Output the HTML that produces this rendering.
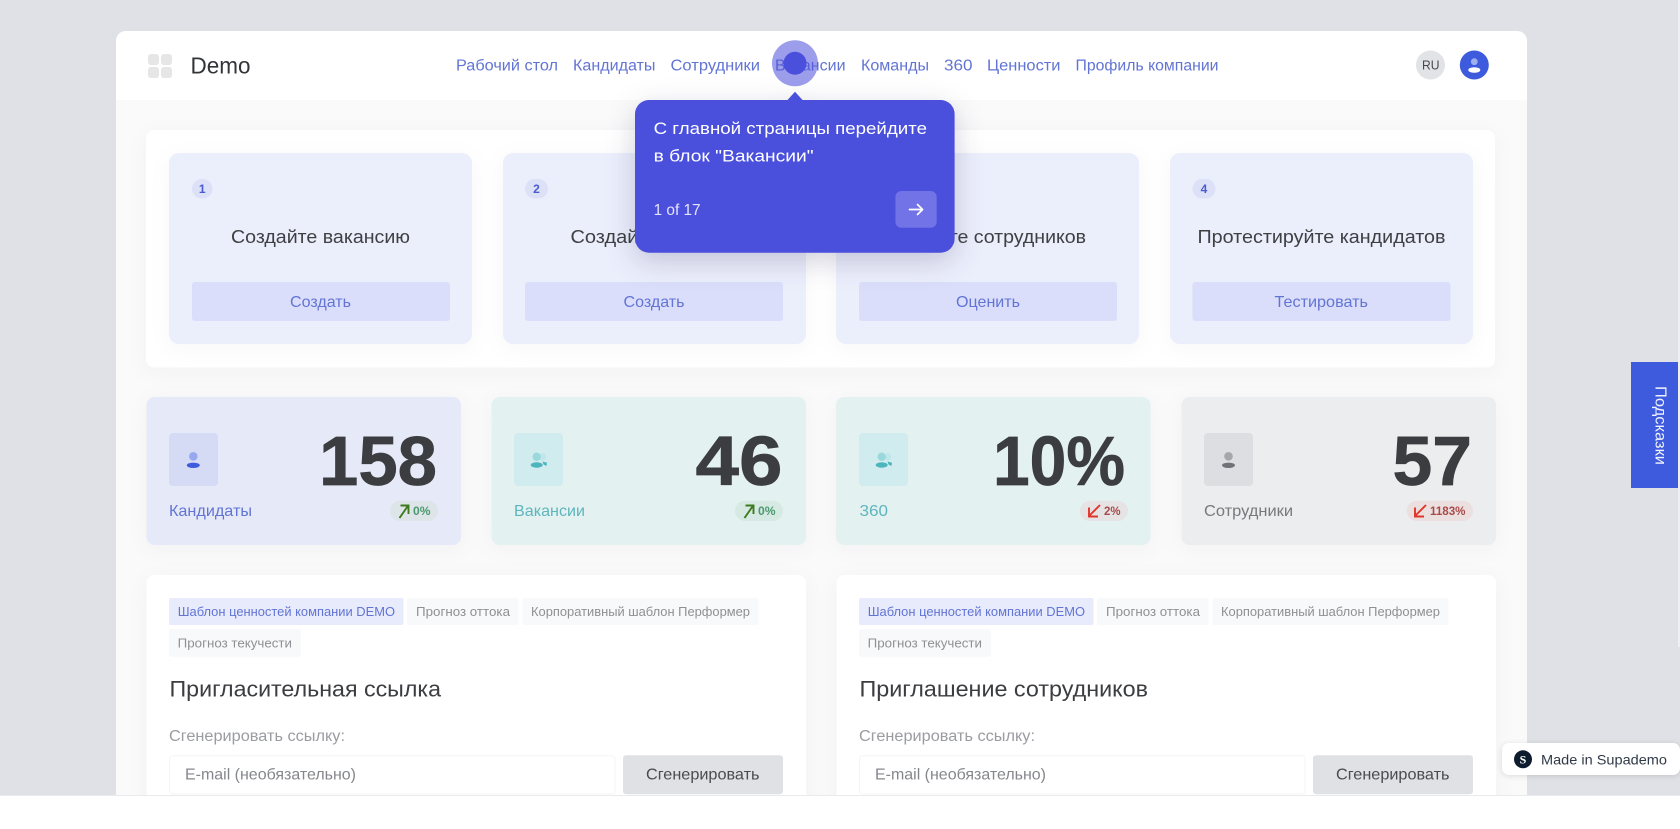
<!DOCTYPE html>
<html lang="ru">
<head>
<meta charset="utf-8">
<title>Demo</title>
<style>
html,body{margin:0;padding:0;width:1680px;height:829px;overflow:hidden;background:#fff}
svg{display:block;filter:blur(.3px)}
text{font-family:"Liberation Sans","Noto Sans CJK SC",sans-serif}
.sh{filter:drop-shadow(0 4px 10px rgba(30,40,80,.035))}
.tip{filter:drop-shadow(0 8px 14px rgba(30,30,80,.2))}
</style>
</head>
<body>
<svg width="1680" height="829" viewBox="0 0 1680 829" xmlns="http://www.w3.org/2000/svg">
  <rect width="1680" height="829" fill="#dfe1e6"/>
  <rect x="1678" y="0" width="2" height="647" fill="#eeeff1"/>

  <!-- app shell -->
  <rect x="116" y="31" width="1411" height="790" rx="10" fill="#fafafa"/>
  <path d="M116 100V41a10 10 0 0 1 10-10H1517a10 10 0 0 1 10 10V100Z" fill="#fff"/>

  <!-- header -->
  <g fill="#e6e6e6">
    <rect x="148" y="54" width="11" height="11" rx="3"/>
    <rect x="161" y="54" width="11" height="11" rx="3"/>
    <rect x="148" y="67" width="11" height="11" rx="3"/>
    <rect x="161" y="67" width="11" height="11" rx="3"/>
  </g>
  <text x="190.5" y="73.3" font-size="23" fill="#333438" textLength="60" lengthAdjust="spacingAndGlyphs">Demo</text>
  <g font-size="15.5" fill="#6274d4">
    <text x="456" y="70.5" textLength="102" lengthAdjust="spacingAndGlyphs">Рабочий стол</text>
    <text x="573" y="70.5" textLength="82.5" lengthAdjust="spacingAndGlyphs">Кандидаты</text>
    <text x="670.5" y="70.5" textLength="89.5" lengthAdjust="spacingAndGlyphs">Сотрудники</text>
    <text x="775" y="70.5" textLength="70.5" lengthAdjust="spacingAndGlyphs">Вакансии</text>
    <text x="861" y="70.5" textLength="68" lengthAdjust="spacingAndGlyphs">Команды</text>
    <text x="944" y="70.5" textLength="28.5" lengthAdjust="spacingAndGlyphs">360</text>
    <text x="987" y="70.5" textLength="73.5" lengthAdjust="spacingAndGlyphs">Ценности</text>
    <text x="1075.5" y="70.5" textLength="143" lengthAdjust="spacingAndGlyphs">Профиль компании</text>
  </g>
  <circle cx="1430.5" cy="65" r="14.5" fill="#e2e3e6"/>
  <text x="1422" y="69.6" font-size="13" fill="#48494d" textLength="17.5" lengthAdjust="spacingAndGlyphs">RU</text>
  <circle cx="1474.3" cy="65" r="14.5" fill="#3d5bdc"/>
  <circle cx="1474.3" cy="61.7" r="3.4" fill="#9fb0f0"/>
  <ellipse cx="1474.3" cy="70" rx="6" ry="2.8" fill="#fff"/>

  <!-- steps panel -->
  <rect x="146" y="130" width="1349" height="237.5" rx="8" fill="#fff" class="sh"/>

  <g class="sh" fill="#ebeefb">
    <rect x="169" y="153" width="303" height="191" rx="10"/>
    <rect x="503" y="153" width="303" height="191" rx="10"/>
    <rect x="836" y="153" width="303" height="191" rx="10"/>
    <rect x="1170" y="153" width="303" height="191" rx="10"/>
  </g>
  <g fill="#dde1f8">
    <rect x="192" y="179" width="20.5" height="19.5" rx="9.7"/>
    <rect x="525" y="179" width="23" height="19.5" rx="9.7"/>
    <rect x="859" y="179" width="23" height="19.5" rx="9.7"/>
    <rect x="1192.5" y="179" width="23" height="19.5" rx="9.7"/>
  </g>
  <g font-size="12" font-weight="700" fill="#4a5bd0" text-anchor="middle">
    <text x="202.2" y="193">1</text>
    <text x="536.5" y="193">2</text>
    <text x="870.5" y="193">3</text>
    <text x="1204" y="193">4</text>
  </g>
  <g font-size="18.5" fill="#3f4043">
    <text x="231" y="243" textLength="179" lengthAdjust="spacingAndGlyphs">Создайте вакансию</text>
    <text x="570.5" y="243" textLength="190" lengthAdjust="spacingAndGlyphs">Создайте кандидата</text>
    <text x="890" y="243" textLength="196" lengthAdjust="spacingAndGlyphs">Оцените сотрудников</text>
    <text x="1197.5" y="243" textLength="248" lengthAdjust="spacingAndGlyphs">Протестируйте кандидатов</text>
  </g>
  <g fill="#dadefa">
    <rect x="192" y="282" width="258" height="39" rx="3"/>
    <rect x="525" y="282" width="258" height="39" rx="3"/>
    <rect x="859" y="282" width="258" height="39" rx="3"/>
    <rect x="1192.5" y="282" width="258" height="39" rx="3"/>
  </g>
  <g font-size="16" fill="#6274d4">
    <text x="290" y="306.8" textLength="61" lengthAdjust="spacingAndGlyphs">Создать</text>
    <text x="623.5" y="306.8" textLength="61" lengthAdjust="spacingAndGlyphs">Создать</text>
    <text x="956" y="306.8" textLength="64" lengthAdjust="spacingAndGlyphs">Оценить</text>
    <text x="1274.5" y="306.8" textLength="93.5" lengthAdjust="spacingAndGlyphs">Тестировать</text>
  </g>

  <!-- stat cards -->
  <g class="sh">
    <rect x="146.5" y="397" width="314.5" height="148" rx="8" fill="#e6e9f7"/>
    <rect x="491.5" y="397" width="314.5" height="148" rx="8" fill="#e3f2f1"/>
    <rect x="836" y="397" width="314.5" height="148" rx="8" fill="#e3f2f1"/>
    <rect x="1181.5" y="397" width="314.5" height="148" rx="8" fill="#ecedef"/>
  </g>
  <rect x="169" y="433" width="49" height="53" rx="4" fill="#d5daf5"/>
  <rect x="514" y="433" width="49" height="53" rx="4" fill="#d0ecee"/>
  <rect x="859" y="433" width="49" height="53" rx="4" fill="#d0ecee"/>
  <rect x="1204" y="433" width="49" height="53" rx="4" fill="#dddee1"/>

  <circle cx="193.3" cy="456.3" r="4.3" fill="#98a8ee"/>
  <ellipse cx="193.3" cy="465.3" rx="6.5" ry="2.7" fill="#3d5bdc"/>

  <g id="teal1">
    <circle cx="542.7" cy="456.8" r="3.6" fill="#bfe6e8"/>
    <circle cx="536.7" cy="456.8" r="4.2" fill="#9bd8dd"/>
    <ellipse cx="536.7" cy="465" rx="6" ry="2.7" fill="#4db5bd"/>
    <path d="M542.5 461.5l4.5 1.2-.5 3.3-3-1.5Z" fill="#4db5bd"/>
  </g>
  <g transform="translate(345 0)">
    <circle cx="542.7" cy="456.8" r="3.6" fill="#bfe6e8"/>
    <circle cx="536.7" cy="456.8" r="4.2" fill="#9bd8dd"/>
    <ellipse cx="536.7" cy="465" rx="6" ry="2.7" fill="#4db5bd"/>
    <path d="M542.5 461.5l4.5 1.2-.5 3.3-3-1.5Z" fill="#4db5bd"/>
  </g>

  <circle cx="1228.5" cy="456.3" r="4.3" fill="#a6a7ab"/>
  <ellipse cx="1228.5" cy="465.3" rx="6.5" ry="2.7" fill="#6f7378"/>

  <g font-size="70" font-weight="700" fill="#3c3d40" stroke="#3c3d40" stroke-width=".7">
    <text x="319" y="485" textLength="118" lengthAdjust="spacingAndGlyphs">158</text>
    <text x="695.5" y="485" textLength="87" lengthAdjust="spacingAndGlyphs">46</text>
    <text x="993" y="485" textLength="132" lengthAdjust="spacingAndGlyphs">10%</text>
    <text x="1392.5" y="485" textLength="79.5" lengthAdjust="spacingAndGlyphs">57</text>
  </g>
  <g font-size="16">
    <text x="169" y="515.8" fill="#6274d4" textLength="83" lengthAdjust="spacingAndGlyphs">Кандидаты</text>
    <text x="514" y="515.8" fill="#5eb5bd" textLength="71" lengthAdjust="spacingAndGlyphs">Вакансии</text>
    <text x="859.5" y="515.8" fill="#5eb5bd" textLength="28.5" lengthAdjust="spacingAndGlyphs">360</text>
    <text x="1204" y="515.8" fill="#77797e" textLength="89" lengthAdjust="spacingAndGlyphs">Сотрудники</text>
  </g>

  <rect x="390" y="500.7" width="48" height="20.3" rx="10.1" fill="#dde5e9"/>
  <rect x="735" y="500.7" width="48" height="20.3" rx="10.1" fill="#d6e9e3"/>
  <rect x="1080" y="500.7" width="48" height="20.3" rx="10.1" fill="#e5e3e3"/>
  <rect x="1406.7" y="500.7" width="66.3" height="20.3" rx="10.1" fill="#ecdfdf"/>

  <g fill="none" stroke="#3d7a1e" stroke-width="1.9">
    <path d="M399.5 518L408 505.8M400.5 505.5H408.5V514"/>
    <path d="M744.5 518L753 505.8M745.5 505.5H753.5V514"/>
  </g>
  <g fill="none" stroke="#e0352b" stroke-width="1.9">
    <path d="M1100 505L1089 516M1089 507.5V516.5H1098"/>
    <path d="M1426 505L1415 516M1415 507.5V516.5H1424"/>
  </g>
  <g font-size="12" font-weight="700">
    <text x="413" y="515" fill="#4a9a6e" textLength="17.5" lengthAdjust="spacingAndGlyphs">0%</text>
    <text x="758" y="515" fill="#4a9a6e" textLength="17.5" lengthAdjust="spacingAndGlyphs">0%</text>
    <text x="1104" y="515" fill="#a94a4a" textLength="16.5" lengthAdjust="spacingAndGlyphs">2%</text>
    <text x="1430" y="515" fill="#a94a4a" textLength="35.5" lengthAdjust="spacingAndGlyphs">1183%</text>
  </g>

  <!-- bottom cards -->
  <g id="c1">
    <rect x="146.5" y="575" width="659.5" height="260" rx="8" fill="#fff" class="sh"/>
    <rect x="169" y="598" width="234.5" height="27" rx="2" fill="#e8ebfb"/>
    <rect x="407" y="598" width="111.5" height="27" rx="2" fill="#f8f9fa"/>
    <rect x="522.6" y="598" width="236" height="27" rx="2" fill="#f8f9fa"/>
    <rect x="169" y="629.3" width="131.8" height="27.4" rx="2" fill="#f8f9fa"/>
    <g font-size="13">
      <text x="177.7" y="616" fill="#6274d4" textLength="217.3" lengthAdjust="spacingAndGlyphs">Шаблон ценностей компании DEMO</text>
      <text x="416" y="616" fill="#8e9094" textLength="94" lengthAdjust="spacingAndGlyphs">Прогноз оттока</text>
      <text x="531" y="616" fill="#8e9094" textLength="219" lengthAdjust="spacingAndGlyphs">Корпоративный шаблон Перформер</text>
      <text x="177.7" y="647.5" fill="#8e9094" textLength="114.3" lengthAdjust="spacingAndGlyphs">Прогноз текучести</text>
    </g>
    <text x="169.5" y="696.5" font-size="22" fill="#3c3d40" textLength="271.5" lengthAdjust="spacingAndGlyphs">Пригласительная ссылка</text>
    <text x="169" y="740.8" font-size="15.5" fill="#9a9ca0" textLength="176" lengthAdjust="spacingAndGlyphs">Сгенерировать ссылку:</text>
    <rect x="169.5" y="755.8" width="445.5" height="38" rx="3" fill="#fff" stroke="#f4f5f6"/>
    <text x="185" y="779.3" font-size="16" fill="#85878b" textLength="171" lengthAdjust="spacingAndGlyphs">E-mail (необязательно)</text>
    <rect x="623" y="755.3" width="160" height="39" rx="3" fill="#e0e1e4"/>
    <text x="646" y="779.3" font-size="16" fill="#4a4b4e" textLength="113.5" lengthAdjust="spacingAndGlyphs">Сгенерировать</text>
  </g>
  <g id="c2" transform="translate(690 0)">
    <rect x="146.5" y="575" width="659.5" height="260" rx="8" fill="#fff" class="sh"/>
    <rect x="169" y="598" width="234.5" height="27" rx="2" fill="#e8ebfb"/>
    <rect x="407" y="598" width="111.5" height="27" rx="2" fill="#f8f9fa"/>
    <rect x="522.6" y="598" width="236" height="27" rx="2" fill="#f8f9fa"/>
    <rect x="169" y="629.3" width="131.8" height="27.4" rx="2" fill="#f8f9fa"/>
    <g font-size="13">
      <text x="177.7" y="616" fill="#6274d4" textLength="217.3" lengthAdjust="spacingAndGlyphs">Шаблон ценностей компании DEMO</text>
      <text x="416" y="616" fill="#8e9094" textLength="94" lengthAdjust="spacingAndGlyphs">Прогноз оттока</text>
      <text x="531" y="616" fill="#8e9094" textLength="219" lengthAdjust="spacingAndGlyphs">Корпоративный шаблон Перформер</text>
      <text x="177.7" y="647.5" fill="#8e9094" textLength="114.3" lengthAdjust="spacingAndGlyphs">Прогноз текучести</text>
    </g>
    <text x="169.5" y="696.5" font-size="22" fill="#3c3d40" textLength="288.5" lengthAdjust="spacingAndGlyphs">Приглашение сотрудников</text>
    <text x="169" y="740.8" font-size="15.5" fill="#9a9ca0" textLength="176" lengthAdjust="spacingAndGlyphs">Сгенерировать ссылку:</text>
    <rect x="169.5" y="755.8" width="445.5" height="38" rx="3" fill="#fff" stroke="#f4f5f6"/>
    <text x="185" y="779.3" font-size="16" fill="#85878b" textLength="171" lengthAdjust="spacingAndGlyphs">E-mail (необязательно)</text>
    <rect x="623" y="755.3" width="160" height="39" rx="3" fill="#e0e1e4"/>
    <text x="646" y="779.3" font-size="16" fill="#4a4b4e" textLength="113.5" lengthAdjust="spacingAndGlyphs">Сгенерировать</text>
  </g>

  <!-- page bottom -->
  <rect x="0" y="795" width="1680" height="34" fill="#fff"/>
  <rect x="0" y="795" width="1680" height="1" fill="#e9eaec"/>

  <!-- hints tab -->
  <rect x="1631" y="362" width="47" height="126" fill="#3d5bdc"/>
  <text transform="translate(1655.5 386) rotate(90)" font-size="15.5" fill="#fff" fill-opacity=".92" textLength="79" lengthAdjust="spacingAndGlyphs">Подсказки</text>

  <!-- supademo badge -->
  <rect x="1502" y="743" width="178" height="32" rx="7" fill="#fff" style="filter:drop-shadow(0 1px 3px rgba(0,0,0,.12))"/>
  <circle cx="1523" cy="759.3" r="9" fill="#0c1c2e"/>
  <text x="1523" y="763.6" font-size="12" font-weight="700" fill="#fff" text-anchor="middle" style="font-family:'Liberation Serif',serif">S</text>
  <text x="1541" y="764.3" font-size="14" fill="#2f3a48" textLength="126" lengthAdjust="spacingAndGlyphs">Made in Supademo</text>

  <!-- tour pulse + tooltip -->
  <circle cx="795" cy="63.3" r="23" fill="#4a4fdc" fill-opacity=".55"/>
  <circle cx="795" cy="63.3" r="11.5" fill="#4a4fdc"/>
  <g class="tip">
    <path d="M787.5 100L795 91.7L802.5 100Z" fill="#4a4fdc"/>
    <rect x="635" y="100" width="319.6" height="152.7" rx="14" fill="#4a4fdc"/>
  </g>
  <text x="653.6" y="134" font-size="17" fill="#fff" textLength="273.4" lengthAdjust="spacingAndGlyphs">С главной страницы перейдите</text>
  <text x="653.6" y="161.5" font-size="17" fill="#fff" textLength="160" lengthAdjust="spacingAndGlyphs">в блок "Вакансии"</text>
  <text x="653.6" y="215" font-size="16" fill="#fff" fill-opacity=".85" textLength="47" lengthAdjust="spacingAndGlyphs">1 of 17</text>
  <rect x="895.4" y="191" width="41.3" height="36.7" rx="6" fill="#7173e6"/>
  <path d="M909.5 209.5H922.5M917.5 204.5L922.6 209.5L917.5 214.5" fill="none" stroke="#fff" stroke-width="1.7" stroke-linecap="round" stroke-linejoin="round"/>
</svg>
</body>
</html>
